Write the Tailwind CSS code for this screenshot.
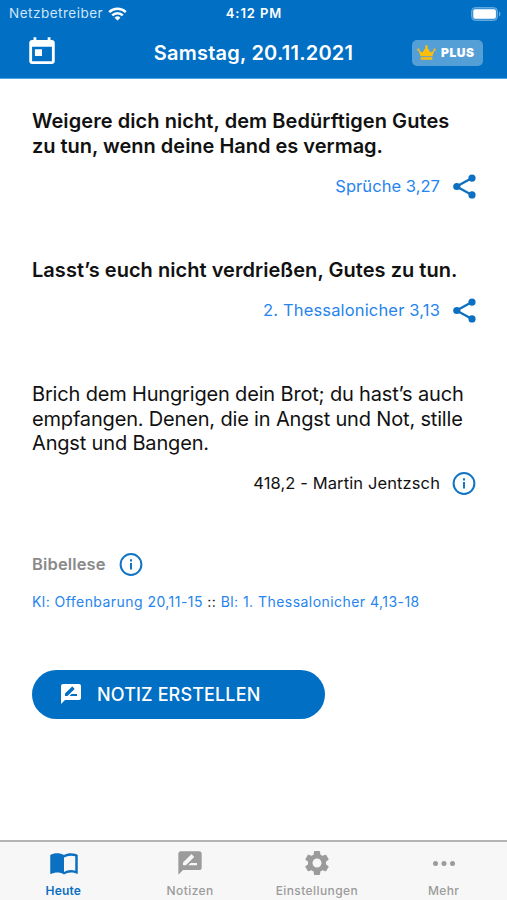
<!DOCTYPE html>
<html lang="de">
<head>
<meta charset="utf-8">
<title>Samstag, 20.11.2021</title>
<script src="https://cdn.jsdelivr.net/npm/@tailwindcss/browser@4"></script>
</head>
<body class="h-[900px] w-[507px] overflow-hidden bg-white font-['Inter',sans-serif] text-[#111]">
<div class="flex h-[900px] flex-col whitespace-nowrap">
  <header class="h-[79px] shrink-0 border-b border-[#4ba3e0] bg-[#006fc4] text-white">
    <div class="grid h-[27px] grid-cols-3 items-center pl-[9px] pr-[6px]">
      <div class="flex items-center gap-[5px]">
        <span class="text-[13.5px] tracking-[0.5px] text-[#cfe6f8]">Netzbetreiber</span>
        <svg class="h-[14px] w-[19px] shrink-0" viewBox="0 0 19 14" fill="none" stroke="#fff" stroke-width="2.5"><path d="M1.2 5.1a11.8 11.8 0 0 1 16.600 0M4.200 8.400a7.500 7.500 0 0 1 10.600 0"/><path d="M9.500 13.600 6.500 10.700a4.300 4.300 0 0 1 6 0Z" fill="#fff" stroke="none"/></svg>
      </div>
      <span class="pr-[2px] text-center text-[13px] font-semibold tracking-[0.9px]">4:12 PM</span>
      <svg class="h-[14px] w-[30px] justify-self-end" viewBox="0 0 30 14"><rect x=".5" y=".5" width="26" height="13" rx="4" fill="#3c91d4" stroke="#62a9df"/><rect x="2.300" y="2.300" width="22.600" height="9.400" rx="2" fill="#fff"/><path d="M28 4.500c2 .7 2 4.300 0 5Z" fill="#62a9df"/></svg>
    </div>
    <div class="grid h-[51px] grid-cols-[106px_1fr_106px] items-center pl-[24px] pr-[24px]">
      <svg class="ml-[1px] -mt-[2px] h-[32px] w-[34px]" viewBox="0 0 24 24" preserveAspectRatio="none" fill="#fff"><path d="M19 3h-1V1h-2v2H8V1H6v2H5c-1.110 0-1.990.9-1.990 2L3 19c0 1.100.89 2 2 2h14c1.100 0 2-.9 2-2V5c0-1.100-.9-2-2-2zm0 16H5V8h14v11zM7 10h5v5H7z"/></svg>
      <h1 class="text-center text-[20px] font-semibold leading-6 tracking-[0.22px]">Samstag, 20.11.2021</h1>
      <div class="flex h-[26px] w-[71px] items-center gap-[5px] justify-self-end rounded-[5px] bg-[#559fd7] pl-[5px]">
        <svg class="h-[16px] w-[19px]" viewBox="0 0 19 16" fill="#fdbd0b"><path d="m3.700 11.200-2.300-6 4 2.300L9.500 1.600l4.100 5.900 4-2.300-2.300 6ZM3.700 12.200h11.600v2.600H3.700Z"/><circle cx="1.500" cy="4.700" r="1.200"/><circle cx="9.500" cy="1.700" r="1.400"/><circle cx="17.500" cy="4.700" r="1.200"/></svg>
        <span class="text-[12px] font-black tracking-[0.6px]">PLUS</span>
      </div>
    </div>
  </header>

  <main class="flex-1 pl-[32px] pr-[30px] pt-[30px]">
    <section>
      <p class="text-[20px] font-semibold leading-[25px]"><span class="tracking-[0.07px]">Weigere dich nicht, dem Bedürftigen Gutes</span><br><span class="tracking-[-0.01px]">zu tun, wenn deine Hand es vermag.</span></p>
      <div class="mt-[12px] flex h-[30px] items-center justify-end gap-[12px]">
        <a class="text-[16.5px] tracking-[0.05px] text-[#2684ee]">Sprüche 3,27</a>
        <svg class="h-[25px] w-[25px]" viewBox="0 0 25 25" fill="#0b70c1"><path d="M4.500 12.500 20 4M4.500 12.500 20 21" stroke="#0b70c1" stroke-width="2.300"/><circle cx="4.800" cy="12.500" r="3.600"/><circle cx="20" cy="4.100" r="3.600"/><circle cx="20" cy="20.900" r="3.600"/></svg>
      </div>
    </section>
    <section class="mt-[57px]">
      <p class="text-[20px] font-semibold leading-[25px] tracking-[0.04px]">Lasst’s euch nicht verdrießen, Gutes zu tun.</p>
      <div class="mt-[12px] flex h-[30px] items-center justify-end gap-[12px]">
        <a class="text-[16.5px] tracking-[0.16px] text-[#2684ee]">2. Thessalonicher 3,13</a>
        <svg class="h-[25px] w-[25px]" viewBox="0 0 25 25" fill="#0b70c1"><path d="M4.500 12.500 20 4M4.500 12.500 20 21" stroke="#0b70c1" stroke-width="2.300"/><circle cx="4.800" cy="12.500" r="3.600"/><circle cx="20" cy="4.100" r="3.600"/><circle cx="20" cy="20.900" r="3.600"/></svg>
      </div>
    </section>
    <section class="mt-[57px]">
      <p class="text-[20px] leading-[24.600px] tracking-[-0.17px]">Brich dem Hungrigen dein Brot; du hast’s auch<br>empfangen. Denen, die in Angst und Not, stille<br>Angst und Bangen.</p>
      <div class="mt-[13px] flex h-[30px] items-center justify-end gap-[12px]">
        <span class="text-[16.5px] tracking-[0.11px]">418,2 - Martin Jentzsch</span>
        <svg class="h-[25px] w-[25px]" viewBox="0 0 25 25" fill="none" stroke="#1274c4" stroke-width="2"><circle cx="12" cy="12.500" r="10.400"/><path d="M12 11v6.500M12 7.200v2.200"/></svg>
      </div>
    </section>
    <section class="mt-[51px]">
      <div class="flex h-[30px] items-center gap-[13px]">
        <h2 class="text-[16.5px] font-semibold tracking-[0.14px] text-[#8a8a8a]">Bibellese</h2>
        <svg class="h-[25px] w-[25px]" viewBox="0 0 25 25" fill="none" stroke="#1274c4" stroke-width="2"><circle cx="12" cy="12.500" r="10.400"/><path d="M12 11v6.500M12 7.200v2.200"/></svg>
      </div>
      <p class="mt-[12px] text-[14px] leading-5 tracking-[0.45px]"><a class="text-[#2684ee]">Kl: Offenbarung 20,11-15</a> :: <a class="text-[#2684ee]">Bl: 1. Thessalonicher 4,13-18</a></p>
    </section>
    <button class="mt-[58px] flex h-[49px] w-[293px] items-center gap-[14px] rounded-full bg-[#006fc4] pl-[27px] text-white">
      <svg class="h-[24px] w-[24px]" viewBox="0 0 24 24" fill="#fff"><path d="M20 2H4c-1.100 0-1.990.9-1.990 2L2 22l4-4h14c1.100 0 2-.9 2-2V4c0-1.100-.9-2-2-2zM6 14v-2.470l6.880-6.880c.2-.2.510-.2.710 0l1.770 1.770c.2.2.2.510 0 .71L8.470 14H6zm12 0h-7.500l2-2H18v2z"/></svg>
      <span class="pt-px text-[18px] font-medium tracking-[0.13px]">NOTIZ ERSTELLEN</span>
    </button>
  </main>

  <nav class="grid h-[60px] shrink-0 grid-cols-4 border-t-2 border-[#b4b4b4] bg-[#f7f7f7] text-[12px] font-medium tracking-[0.4px] text-[#9b9b9b]">
    <a class="flex flex-col items-center pt-[5px] font-semibold tracking-[0.2px] text-[#0b70c1]">
      <svg class="ml-px h-[31px] w-[30px]" viewBox="0 0 24 24" fill="currentColor"><path d="M21 5c-1.110-.35-2.330-.5-3.500-.5-1.950 0-4.050.4-5.500 1.500-1.450-1.100-3.550-1.500-5.500-1.500S2.450 4.900 1 6v14.650c0 .25.25.5.5.5.1 0 .15-.05.25-.05C3.100 20.450 5.050 20 6.500 20c1.950 0 4.050.4 5.500 1.500 1.350-.85 3.800-1.500 5.500-1.500 1.650 0 3.350.3 4.750 1.050.1.05.15.05.25.05.25 0 .5-.25.5-.5V6c-.6-.45-1.250-.75-2-1zm0 13.500c-1.100-.35-2.300-.5-3.500-.5-1.700 0-4.150.65-5.500 1.500V8c1.350-.85 3.800-1.500 5.500-1.500 1.200 0 2.400.15 3.500.5v11.500z"/></svg>
      <span class="mt-[5px] leading-4">Heute</span>
    </a>
    <a class="flex flex-col items-center pt-[6px]">
      <svg class="my-px h-[28px] w-[30px]" viewBox="0 0 24 24" fill="currentColor"><path d="M20 2H4c-1.100 0-1.990.9-1.990 2L2 22l4-4h14c1.100 0 2-.9 2-2V4c0-1.100-.9-2-2-2zM6 14v-2.470l6.880-6.880c.2-.2.510-.2.710 0l1.770 1.770c.2.2.2.510 0 .71L8.470 14H6zm12 0h-7.500l2-2H18v2z"/></svg>
      <span class="mt-[5px] leading-4">Notizen</span>
    </a>
    <a class="flex flex-col items-center pt-[6px]">
      <svg class="h-[30px] w-[30px]" viewBox="0 0 24 24" fill="currentColor"><path d="M19.140 12.940c.04-.3.060-.61.060-.94 0-.32-.02-.64-.07-.94l2.030-1.580c.18-.14.23-.41.120-.61l-1.920-3.320c-.12-.22-.37-.29-.59-.22l-2.390.96c-.5-.38-1.030-.7-1.620-.94l-.36-2.540c-.04-.24-.24-.41-.48-.41h-3.840c-.24 0-.43.170-.47.410l-.36 2.540c-.59.24-1.130.57-1.620.94l-2.390-.96c-.22-.08-.47 0-.59.22L2.740 8.870c-.12.21-.08.47.12.61l2.030 1.580c-.05.3-.09.63-.09.94s.02.64.07.94l-2.030 1.580c-.18.14-.23.41-.12.61l1.920 3.320c.12.22.37.29.59.22l2.390-.96c.5.380 1.030.7 1.620.940l.36 2.540c.05.24.24.41.48.41h3.840c.24 0 .44-.17.47-.41l.36-2.540c.59-.24 1.130-.56 1.620-.94l2.390.96c.22.08.47 0 .59-.22l1.920-3.320c.12-.22.07-.47-.12-.61l-2.010-1.580zM12 15.600c-1.980 0-3.600-1.620-3.600-3.600s1.620-3.600 3.600-3.600 3.600 1.620 3.600 3.600-1.620 3.600-3.600 3.600z"/></svg>
      <span class="mt-[5px] leading-4">Einstellungen</span>
    </a>
    <a class="flex flex-col items-center pt-[6px]">
      <svg class="h-[30px] w-[30px]" viewBox="0 0 30 30" fill="currentColor"><circle cx="6.500" cy="15.500" r="2.500"/><circle cx="15" cy="15.500" r="2.500"/><circle cx="23.500" cy="15.500" r="2.500"/></svg>
      <span class="mt-[5px] leading-4">Mehr</span>
    </a>
  </nav>
</div>
</body>
</html>
